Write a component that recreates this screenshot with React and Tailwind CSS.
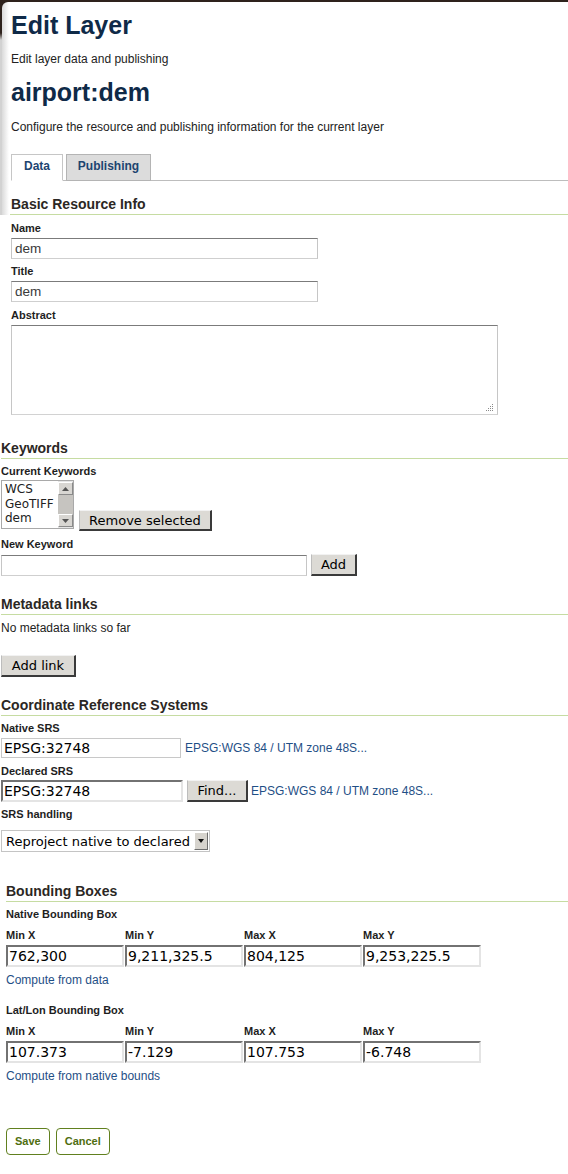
import React from "react";

const sans = "font-['Liberation_Sans',Arial,sans-serif]";
const deja = "font-['DejaVu_Sans',Verdana,sans-serif]";

function Label({ children, className = "" }) {
  return (
    <div className={`text-[11px] leading-[14px] font-bold text-[#1e1e1e] ${className}`}>
      {children}
    </div>
  );
}

function Heading({ children, className = "" }) {
  return (
    <h3
      className={`text-[14px] leading-[16px] font-bold text-[#2b2724] pb-[2px] border-b border-b-[#c6dca2] ${className}`}
    >
      {children}
    </h3>
  );
}

function Btn({ children, className = "" }) {
  return (
    <button
      type="button"
      className={`${deja} flex items-center justify-center text-[13px] leading-none text-black bg-[#dcdad5] border-t border-l border-r-2 border-b-2 border-t-[#f2f2f2] border-l-[#bdbdbd] border-r-[#3a3a3a] border-b-[#3a3a3a] ${className}`}
    >
      {children}
    </button>
  );
}

// three looks of the text fields in the screenshot
function Field({ value = "", kind = "top", className = "" }) {
  const look =
    kind === "inset"
      ? `${deja} text-[14px] text-black pl-[1px] border-2 border-t-[#727272] border-l-[#727272] border-r-[#e4e4e4] border-b-[#e4e4e4]`
      : kind === "plain"
      ? `${deja} text-[14px] text-black pl-[2px] border border-[#c8c8c8]`
      : `${sans} text-[13.5px] text-[#3a3a3a] pl-[3px] border border-t-[#7b7b7b] border-l-[#c6c6c6] border-r-[#c6c6c6] border-b-[#cfcfcf]`;
  return (
    <input
      readOnly
      value={value}
      className={`block bg-white outline-none ${look} ${className}`}
    />
  );
}

function Arrow({ up }) {
  return (
    <svg width="7" height="4" viewBox="0 0 7 4">
      <path d={up ? "M0 4 L3.5 0 L7 4 Z" : "M0 0 L7 0 L3.5 4 Z"} fill="#555" />
    </svg>
  );
}

function Listbox() {
  return (
    <div className={`${deja} mb-[2px] flex h-[49px] w-[73px] border border-[#a9a9a9] bg-white`}>
      <div className="flex-1 pl-[3px] pt-[1px] text-[12px] leading-[14.5px] text-[#222]">
        <div>WCS</div>
        <div>GeoTIFF</div>
        <div>dem</div>
      </div>
      <div className="flex w-[15px] flex-col bg-[#e6e6e6] py-[1px]">
        <div className="flex h-[13px] items-center justify-center border border-t-white border-l-white border-r-[#8a8a8a] border-b-[#8a8a8a] bg-[#d8d6d2]">
          <Arrow up />
        </div>
        <div className="flex-1 bg-[#c6c4c0]" />
        <div className="flex h-[13px] items-center justify-center border border-t-white border-l-white border-r-[#8a8a8a] border-b-[#8a8a8a] bg-[#d8d6d2]">
          <Arrow />
        </div>
      </div>
    </div>
  );
}

function LinkText({ children, className = "" }) {
  return (
    <span className={`text-[12px] leading-[16px] text-[#1f4f86] ${className}`}>{children}</span>
  );
}

function BBox({ values }) {
  const names = ["Min X", "Min Y", "Max X", "Max Y"];
  return (
    <>
      <div className="mt-[7px] grid grid-cols-[119px_119px_119px_119px]">
        {names.map((n) => (
          <Label key={n}>{n}</Label>
        ))}
      </div>
      <div className="mt-[3px] grid grid-cols-[119px_119px_119px_119px]">
        {values.map((v, i) => (
          <Field key={i} kind="inset" value={v} className="h-[22px] w-[118px]" />
        ))}
      </div>
    </>
  );
}

export default function App() {
  return (
    <div className={`${sans} min-h-[1174px] bg-white text-[#222]`}>
      <div className="bg-[linear-gradient(to_bottom,#2e221c_0,#2e221c_33px,#d2d2d2_40px)] pt-[2px] pl-[2px]">
        <div className="rounded-tl-[6px] bg-[linear-gradient(to_right,#dadada,#ffffff_7px)] pl-[9px]">
          <h1 className="pt-[8px] text-[25px] leading-[30px] font-bold text-[#0f2a48]">Edit Layer</h1>
          <p className="mt-[11px] text-[12px] leading-[16px] text-[#222]">Edit layer data and publishing</p>
          <h2 className="mt-[10px] text-[25px] leading-[30px] font-bold text-[#0f2a48]">airport:dem</h2>
          <p className="mt-[12px] text-[12px] leading-[16px] text-[#222]">
            Configure the resource and publishing information for the current layer
          </p>
          <div className="mt-[19px] flex gap-[3px] border-b border-b-[#bdbdbd]">
            <div className="-mb-px w-[52px] border border-t-[#c6c6c6] border-l-[#c6c6c6] border-r-[#c6c6c6] border-b-white bg-white pt-[3px] pb-[6px] text-center text-[12px] leading-[16px] font-bold text-[#1d4470]">
              Data
            </div>
            <div className="-mb-px w-[85px] border border-[#b4b4b4] bg-[#dcdcdc] pt-[3px] pb-[6px] text-center text-[12px] leading-[16px] font-bold text-[#1d4470]">
              Publishing
            </div>
          </div>
          <Heading className="mt-[15px] -ml-px pl-px">Basic Resource Info</Heading>
        </div>
      </div>

      <div className="pl-[11px]">
        <Label className="pt-[6px]">Name</Label>
        <Field value="dem" className="mt-[3px] h-[21px] w-[307px]" />
        <Label className="mt-[5px]">Title</Label>
        <Field value="dem" className="mt-[3px] h-[21px] w-[307px]" />
        <Label className="mt-[6px]">Abstract</Label>
        <div className="relative mt-[3px] h-[90px] w-[487px]">
          <textarea
            readOnly
            className="block h-full w-full resize-none border border-t-[#7b7b7b] border-l-[#c6c6c6] border-r-[#c6c6c6] border-b-[#d2d2d2] bg-white outline-none"
          />
          <svg className="absolute bottom-[3px] right-[4px]" width="9" height="9" viewBox="0 0 9 9">
            {[
              [7, 1], [5, 3], [7, 3], [3, 5], [5, 5], [7, 5], [1, 7], [3, 7], [5, 7], [7, 7],
            ].map(([x, y]) => (
              <rect key={`${x}-${y}`} x={x} y={y} width="1" height="1" fill="#8a8a8a" />
            ))}
          </svg>
        </div>
      </div>

      <div className="pl-[1px]">
        <Heading className="mt-[25px]">Keywords</Heading>
        <Label className="mt-[5px]">Current Keywords</Label>
        <div className="mt-[2px] flex items-end gap-[5px]">
          <Listbox />
          <Btn className="h-[21px] w-[133px]">Remove selected</Btn>
        </div>
        <Label className="mt-[6px]">New Keyword</Label>
        <div className="mt-[3px] flex items-end gap-[4px]">
          <Field value="" className="h-[21px] w-[306px]" />
          <Btn className="h-[22px] w-[46px]">Add</Btn>
        </div>

        <Heading className="mt-[20px]">Metadata links</Heading>
        <p className="mt-[5px] text-[12px] leading-[16px] text-[#222]">No metadata links so far</p>
        <Btn className="mt-[19px] h-[22px] w-[75px]">Add link</Btn>

        <Heading className="mt-[20px]">Coordinate Reference Systems</Heading>
        <Label className="mt-[5px]">Native SRS</Label>
        <div className="mt-[3px] flex items-center gap-[4px]">
          <Field kind="plain" value="EPSG:32748" className="h-[20px] w-[180px]" />
          <LinkText>EPSG:WGS 84 / UTM zone 48S...</LinkText>
        </div>
        <Label className="mt-[6px]">Declared SRS</Label>
        <div className="mt-[2px] flex items-center gap-[4px]">
          <Field kind="inset" value="EPSG:32748" className="h-[22px] w-[182px]" />
          <Btn className="h-[22px] w-[61px]">Find...</Btn>
          <LinkText className="-ml-px">EPSG:WGS 84 / UTM zone 48S...</LinkText>
        </div>
        <Label className="mt-[5px]">SRS handling</Label>
        <div className={`${deja} mt-[9px] flex h-[22px] w-[209px] items-center border border-[#c4c4c4] bg-white pl-[4px] pr-[1px]`}>
          <span className="flex-1 text-[13px] leading-none text-black">Reproject native to declared</span>
          <span className="flex h-[18px] w-[14px] items-center justify-center border border-t-white border-l-white border-r-[#6e6e6e] border-b-[#6e6e6e] bg-[#d6d3cd]">
            <svg width="6" height="4" viewBox="0 0 6 4">
              <path d="M0 0 L6 0 L3 4 Z" fill="#111" />
            </svg>
          </span>
        </div>

        <div className="ml-[5px]">
          <Heading className="mt-[31px]">Bounding Boxes</Heading>
          <Label className="mt-[5px]">Native Bounding Box</Label>
          <BBox values={["762,300", "9,211,325.5", "804,125", "9,253,225.5"]} />
          <LinkText className="mt-[5px] block">Compute from data</LinkText>

          <Label className="mt-[15px]">Lat/Lon Bounding Box</Label>
          <BBox values={["107.373", "-7.129", "107.753", "-6.748"]} />
          <LinkText className="mt-[5px] block">Compute from native bounds</LinkText>

          <div className="mt-[44px] flex gap-[6px]">
            <button
              type="button"
              className="h-[27px] rounded-[4px] border border-[#61801f] bg-white px-[8px] text-[11px] font-bold text-[#4f6e10]"
            >
              Save
            </button>
            <button
              type="button"
              className="h-[27px] rounded-[4px] border border-[#61801f] bg-white px-[8px] text-[11px] font-bold text-[#4f6e10]"
            >
              Cancel
            </button>
          </div>
        </div>
      </div>
    </div>
  );
}
